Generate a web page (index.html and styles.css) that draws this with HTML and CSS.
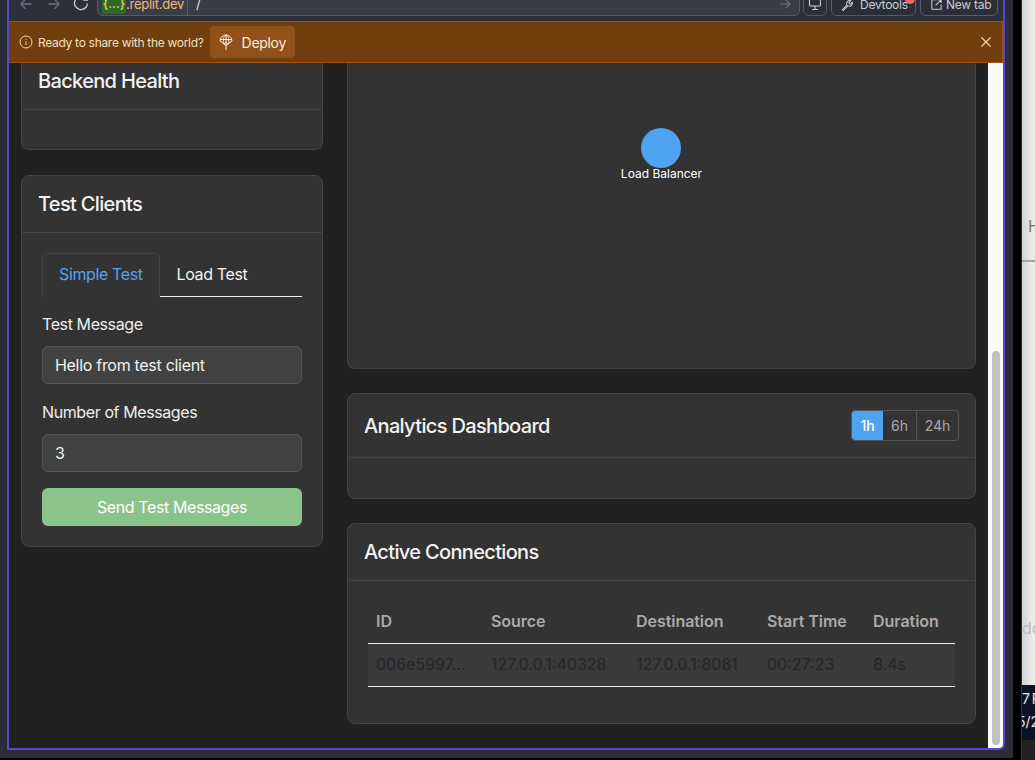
FILE: index.html
```html
<!DOCTYPE html>
<html lang="en">
<head>
    <meta charset="UTF-8">
    <title>Load Balancer Dashboard</title>
    <link rel="stylesheet" href="styles.css">
</head>
<body>
    <div class="desktop">
        <div class="window">
            <div class="frame">
                <div class="topbar">
                    <svg class="nav-icon back" width="12" height="12" viewBox="0 0 12 12"><path d="M11.500 6H.8M5.500 1.300L.8 6l4.700 4.700"/></svg>
                    <svg class="nav-icon forward" width="12" height="12" viewBox="0 0 12 12"><path d="M.5 6h10.700M6.500 1.300L11.200 6l-4.700 4.700"/></svg>
                    <svg class="nav-icon reload" width="16" height="16" viewBox="0 0 16 16"><path d="M14.500 8.500a6.500 6.500 0 1 1-2.200-5.300L14.500 5M14.500 .8V5h-4.200"/></svg>
                    <div class="urlbar">
                        <span class="repl-badge">{...}</span>
                        <span class="domain">.replit.dev</span>
                        <span class="path">/</span>
                        <svg class="url-arrow" width="12" height="12" viewBox="0 0 12 12"><path d="M1 6h10M7 2l4 4-4 4"/></svg>
                    </div>
                    <button class="chrome-btn icon-only">
                        <svg width="14" height="14" viewBox="0 0 14 14"><rect x="1.500" y="0" width="11" height="9" rx="1"/><path d="M7 9v3M4 12.500h6"/></svg>
                    </button>
                    <button class="chrome-btn devtools">
                        <svg width="13" height="13" viewBox="0 0 14 14"><path d="M1.500 12.500l5-5a3.200 3.200 0 0 1 4-4.500L8.500 5l.5 1 1 .5 2-2a3.200 3.200 0 0 1-4.500 4l-5 5z"/></svg>
                        Devtools
                        <span class="notify"></span>
                    </button>
                    <button class="chrome-btn newtab">
                        <svg width="13" height="13" viewBox="0 0 14 14"><path d="M7 2H2v10h10V7M6 8l6-6M8.500 2H12v3.500"/></svg>
                        New tab
                    </button>
                </div>

                <div class="banner">
                    <svg class="info-icon" width="14" height="14" viewBox="0 0 14 14"><circle cx="7" cy="7" r="6"/><path d="M7 6.500v3.500M7 4v.8"/></svg>
                    <span class="banner-text">Ready to share with the world?</span>
                    <button class="deploy-btn">
                        <svg width="14" height="17" viewBox="0 0 14 17"><path d="M1 7a6 6 0 0 1 12 0L7 11.500zM4.300 9C3.800 4.500 5 1.500 7 1 9 1.500 10.200 4.500 9.700 9M1 5.500h12M7 1v15M5 10.500L7 8l2 2.500"/></svg>
                        Deploy
                    </button>
                    <svg class="close-icon" width="10" height="10" viewBox="0 0 10 10"><path d="M.5.5l9 9M9.500.5l-9 9"/></svg>
                </div>

                <div class="viewport">
                    <main class="page">
                        <div class="side-col">
                            <section class="card card-cut">
                                <div class="card-header"><h2>Backend Health</h2></div>
                                <div class="card-body empty-body"></div>
                            </section>
                            <section class="card">
                                <div class="card-header"><h2>Test Clients</h2></div>
                                <div class="card-body client-body">
                                    <div class="tabs">
                                        <span class="tab active">Simple Test</span>
                                        <span class="tab">Load Test</span>
                                    </div>
                                    <label class="field-label">Test Message</label>
                                    <input class="field-input" type="text" value="Hello from test client">
                                    <label class="field-label">Number of Messages</label>
                                    <input class="field-input" type="text" value="3">
                                    <button class="send-btn">Send Test Messages</button>
                                </div>
                            </section>
                        </div>
                        <div class="main-col">
                            <section class="card card-cut topology">
                                <div class="node">
                                    <span class="node-dot"></span>
                                    <span class="node-label">Load Balancer</span>
                                </div>
                            </section>
                            <section class="card">
                                <div class="card-header analytics-header">
                                    <h2>Analytics Dashboard</h2>
                                    <div class="range-group">
                                        <span class="range active">1h</span>
                                        <span class="range">6h</span>
                                        <span class="range wide">24h</span>
                                    </div>
                                </div>
                                <div class="card-body analytics-body"></div>
                            </section>
                            <section class="card">
                                <div class="card-header"><h2>Active Connections</h2></div>
                                <div class="card-body table-body">
                                    <table class="conn-table">
                                        <thead>
                                            <tr><th>ID</th><th>Source</th><th>Destination</th><th>Start Time</th><th>Duration</th></tr>
                                        </thead>
                                        <tbody>
                                            <tr><td>006e5997...</td><td>127.0.0.1:40328</td><td>127.0.0.1:8081</td><td>00:27:23</td><td>8.4s</td></tr>
                                        </tbody>
                                    </table>
                                </div>
                            </section>
                        </div>
                    </main>
                    <div class="scrollbar"><div class="scroll-thumb"></div></div>
                </div>
            </div>
        </div>

        <div class="behind">
            <div class="behind-sheet">
                <span class="behind-h">H</span>
                <span class="behind-rule"></span>
                <span class="behind-do">do</span>
            </div>
            <div class="behind-dark">
                <span class="behind-time">7 F</span>
                <span class="behind-date">5/2</span>
            </div>
            <div class="behind-foot"></div>
        </div>
    </div>
</body>
</html>
```

FILE: styles.css
```css
* {
    box-sizing: border-box;
}
html, body {
    margin: 0;
    height: 100%;
    overflow: hidden;
}
body {
    font-family: Inter, "Liberation Sans", sans-serif;
    color: #f2f2f2;
    background: #000;
}
.desktop {
    display: flex;
    width: 1035px;
    height: 760px;
}

/* browser window */
.window {
    width: 1021px;
    height: 758px;
    flex-shrink: 0;
    background: #2a2d37;
    padding: 0 8px 8px 7px;
    border-right: 8px solid #000;
}
.frame {
    height: 100%;
    display: flex;
    flex-direction: column;
    border: 2px solid #5548d0;
    border-top: none;
    border-bottom-right-radius: 6px;
    overflow: hidden;
}
.topbar {
    height: 21px;
    flex-shrink: 0;
    display: flex;
    align-items: flex-end;
    padding: 0 0 5px 11px;
    overflow: hidden;
    background: #2d303b;
}
.nav-icon {
    fill: none;
    stroke: #6d717c;
    stroke-width: 1.300;
    margin-bottom: 6px;
    flex-shrink: 0;
}
.nav-icon.back {
    margin-right: 16px;
}
.nav-icon.forward {
    margin-right: 13px;
}
.nav-icon.reload {
    stroke: #c9ccd2;
    margin-right: 8px;
    margin-bottom: 5px;
}
.urlbar {
    width: 703px;
    height: 24px;
    flex-shrink: 0;
    display: flex;
    align-items: center;
    background: #3a3d48;
    border: 1px solid #565b69;
    border-radius: 6px;
    padding-left: 4px;
    font-size: 13px;
}
.repl-badge {
    width: 24px;
    height: 20px;
    line-height: 20px;
    background: #2b6b22;
    border-radius: 3px;
    color: #e3c766;
    font-size: 12px;
    font-weight: 600;
    text-align: center;
    white-space: nowrap;
}
.domain {
    color: #eeb77f;
    width: 62px;
    border-right: 1px solid #565b69;
    height: 22px;
    line-height: 22px;
    letter-spacing: -0.25px;
    white-space: nowrap;
}
.path {
    color: #dfe1e5;
    margin-left: 8px;
}
.url-arrow {
    margin-left: auto;
    margin-right: 8px;
    fill: none;
    stroke: #6d717c;
    stroke-width: 1.200;
}
.chrome-btn {
    height: 24px;
    margin-left: 4px;
    flex-shrink: 0;
    display: flex;
    align-items: center;
    background: #2b2e39;
    color: #c9ccd2;
    border: 1px solid #565b69;
    border-radius: 6px;
    font-family: inherit;
    font-size: 12px;
    letter-spacing: -0.25px;
    padding: 0;
    position: relative;
}
.chrome-btn svg {
    fill: none;
    stroke: #c9ccd2;
    stroke-width: 1.100;
}
.icon-only {
    width: 24px;
    margin-left: 3px;
    justify-content: center;
}
.devtools {
    width: 85px;
    padding-left: 9px;
    gap: 6px;
}
.newtab {
    width: 78px;
    padding-left: 9px;
    gap: 3px;
}
.notify {
    position: absolute;
    top: 1px;
    right: 0;
    width: 10px;
    height: 10px;
    border-radius: 50%;
    background: #f06a6a;
}
.banner {
    height: 42px;
    flex-shrink: 0;
    display: flex;
    align-items: center;
    background: #713f0e;
    border: 1px solid #a2530f;
    border-left: none;
    padding: 0 11px 0 10px;
}
.info-icon {
    fill: none;
    stroke: #f4d9b4;
    stroke-width: 1;
    flex-shrink: 0;
}
.banner-text {
    margin-left: 5px;
    font-size: 12px;
    letter-spacing: -0.3px;
    color: #f6dfc0;
    white-space: nowrap;
}
.deploy-btn {
    margin-left: 6px;
    width: 85px;
    height: 32px;
    display: flex;
    align-items: center;
    gap: 9px;
    padding: 0 0 0 9px;
    background: #91511a;
    border: none;
    border-radius: 4px;
    color: #fbeede;
    font-family: inherit;
    font-size: 14px;
    letter-spacing: -0.3px;
}
.deploy-btn svg {
    fill: none;
    stroke: #fbeede;
    stroke-width: 1;
}
.close-icon {
    margin-left: auto;
    fill: none;
    stroke: #f6dfc0;
    stroke-width: 1.100;
}

/* page under the banner */
.viewport {
    flex: 1;
    min-height: 0;
    display: flex;
    background: #212121;
    overflow: hidden;
}
.page {
    flex: 1;
    min-width: 0;
    display: grid;
    grid-template-columns: 302px 629px;
    column-gap: 24px;
    padding-left: 12px;
    align-items: start;
}
.side-col, .main-col {
    display: flex;
    flex-direction: column;
    gap: 24px;
}
.side-col {
    gap: 25px;
}
.scrollbar {
    width: 15px;
    flex-shrink: 0;
    background: #fafafa;
    padding: 288px 3px 3px 4px;
}
.scroll-thumb {
    height: 100%;
    border-radius: 4px;
    background: #c1c1c1;
}

/* cards */
.card {
    background: #333;
    border: 1px solid #444;
    border-radius: 8px;
}
.card-cut {
    border-top: none;
    border-top-left-radius: 0;
    border-top-right-radius: 0;
}
.card-header {
    height: 57px;
    padding: 0 16px;
    display: flex;
    align-items: center;
    border-bottom: 1px solid #444;
}
.card-cut .card-header {
    height: 47px;
    padding-bottom: 10px;
}
.card-header h2 {
    margin: 0;
    font-size: 20px;
    line-height: 24px;
    font-weight: 500;
    letter-spacing: -0.66px;
    color: #f2f2f2;
}
.empty-body {
    height: 39px;
}
.client-body {
    padding: 20px;
}
.tabs {
    display: flex;
    height: 44px;
    border-bottom: 1px solid #eee;
    margin-bottom: 15px;
}
.tab {
    padding: 0 16px;
    line-height: 41px;
    font-size: 16px;
    letter-spacing: -0.38px;
    color: #f2f2f2;
    border: 1px solid transparent;
    border-bottom: none;
}
.tab.active {
    color: #4fa3f0;
    background: #333;
    border-color: #444;
    border-radius: 6px 6px 0 0;
    height: 44px;
}
.field-label {
    display: block;
    font-size: 16px;
    line-height: 25px;
    letter-spacing: -0.4px;
    margin-bottom: 9px;
    color: #eee;
}
.field-input {
    display: block;
    width: 100%;
    height: 38px;
    margin-bottom: 16px;
    padding: 0 12px;
    background: #424242;
    border: 1px solid #555;
    border-radius: 6px;
    color: #f2f2f2;
    font-family: inherit;
    font-size: 16px;
    letter-spacing: -0.3px;
}
.send-btn {
    display: block;
    width: 100%;
    height: 38px;
    background: #8bc48a;
    border: none;
    border-radius: 6px;
    color: #fff;
    font-family: inherit;
    font-size: 16px;
    letter-spacing: -0.4px;
}

/* topology */
.topology {
    height: 306px;
    display: flex;
    justify-content: center;
    padding-top: 65px;
}
.node {
    display: flex;
    flex-direction: column;
    align-items: center;
}
.node-dot {
    width: 40px;
    height: 40px;
    border-radius: 50%;
    background: #4fa3f0;
}
.node-label {
    font-size: 12px;
    line-height: 14px;
    margin-top: -1px;
    color: #fff;
}

/* analytics */
.analytics-header {
    height: 64px;
    justify-content: space-between;
}
.analytics-body {
    height: 40px;
}
.range-group {
    display: flex;
    height: 31px;
    border: 1px solid #555;
    border-radius: 4px;
    overflow: hidden;
    font-size: 14px;
    color: #aaa;
}
.range {
    width: 33px;
    text-align: center;
    line-height: 29px;
}
.range.active {
    width: 31px;
    background: #4fa3f0;
    color: #fff;
    font-weight: 500;
}
.range.wide {
    width: 42px;
    border-left: 1px solid #555;
}

/* connections table */
.table-body {
    padding: 20px 20px 37px 20px;
    height: 142px;
}
.conn-table {
    width: 587px;
    border-collapse: collapse;
    font-size: 16px;
    table-layout: fixed;
}
.conn-table th {
    height: 42px;
    padding: 0 8px 2px;
    text-align: left;
    font-weight: 600;
    letter-spacing: -0.05px;
    color: #aaa;
    border-bottom: 1px solid #eee;
}
.conn-table td {
    height: 43px;
    padding: 0 8px 2px;
    color: #24262b;
    background: #3a3a3a;
    border-bottom: 1px solid #eee;
    white-space: nowrap;
}
.conn-table th:nth-child(1) { width: 115px; }
.conn-table th:nth-child(2) { width: 145px; }
.conn-table th:nth-child(3) { width: 131px; }
.conn-table th:nth-child(4) { width: 106px; }

/* window behind, at the right edge */
.behind {
    flex: 1;
    min-width: 0;
    display: flex;
    flex-direction: column;
    overflow: hidden;
    border-left: 1px solid #333;
}
.behind-sheet {
    height: 685px;
    flex-shrink: 0;
    background: linear-gradient(90deg, #d2d2d2, #f1f1f1);
    color: #777;
    font-size: 16px;
    line-height: 20px;
    padding: 216px 0 0 6px;
    display: flex;
    flex-direction: column;
}
.behind-rule {
    height: 2px;
    margin: 24px 0 0 -6px;
    background: #a5a5a5;
}
.behind-do {
    margin: 356px 0 0 -6px;
    color: #bbb;
}
.behind-dark {
    height: 55px;
    flex-shrink: 0;
    background: #0b1426;
    color: #e6e6e6;
    font-size: 14px;
    line-height: 23px;
    padding-top: 2px;
    display: flex;
    flex-direction: column;
    white-space: nowrap;
}
.behind-time {
    word-spacing: -2px;
}
.behind-date {
    margin-left: -5px;
}
.behind-foot {
    flex: 1;
    background: #222;
}
```
